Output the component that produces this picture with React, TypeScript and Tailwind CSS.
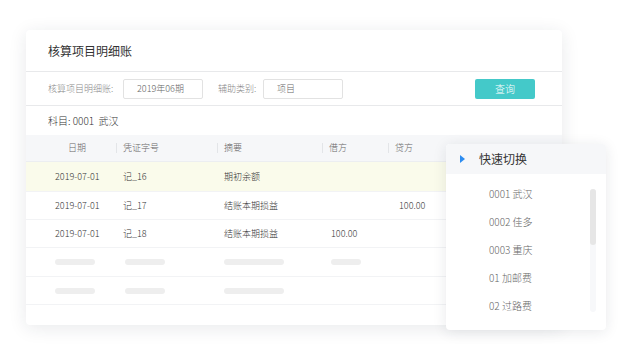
import React from "react";

const font = { fontFamily: '"Noto Sans CJK SC", "Noto Sans", sans-serif' };

function Sep() {
  return <span className="w-px h-[10px] bg-[#e3e5e8] mr-[6px]" />;
}

function Bar({ w }: { w: string }) {
  return <span className={`block h-[6px] rounded-full bg-[#eeeeee] ${w}`} />;
}

const rows = [
  { d: "2019-07-01", v: "记_16", s: "期初余额", j: "", k: "", bg: "bg-[#fafbeb]", h: "h-[30px]" },
  { d: "2019-07-01", v: "记_17", s: "结账本期损益", j: "", k: "100.00", bg: "", h: "h-[28px]" },
  { d: "2019-07-01", v: "记_18", s: "结账本期损益", j: "100.00", k: "", bg: "", h: "h-[28px]" },
];

export default function App() {
  return (
    <div className="relative w-[633px] h-[359px] bg-white overflow-hidden pt-[30px] pl-[26px] font-light" style={font}>
      <div className="w-[536px] h-[295px] bg-white rounded-[4px] shadow-[0_3px_18px_rgba(30,40,60,0.10)] flex flex-col overflow-hidden">
        {/* title */}
        <div className="h-[42px] flex items-center pl-[22px] border-b border-[#e8e9eb]">
          <span className="text-[12px] text-[#333] leading-none font-normal">核算项目明细账</span>
        </div>
        {/* filter */}
        <div className="h-[34px] flex items-center pl-[22px] border-b border-[#e8e9eb] text-[9px]">
          <span className="text-[#888] w-[75px]">核算项目明细账:</span>
          <div className="w-[80px] h-[20px] border border-[#e2e2e2] rounded-[2px] flex items-center pl-[13px] text-[#666]">2019年06期</div>
          <span className="text-[#888] ml-[15px] w-[45px]">辅助类别:</span>
          <div className="w-[80px] h-[20px] border border-[#e2e2e2] rounded-[2px] flex items-center pl-[13px] text-[#666]">项目</div>
          <div className="ml-[132px] w-[60px] h-[20px] rounded-[2px] bg-[#44c9c9] text-white flex items-center justify-center text-[10px]">查询</div>
        </div>
        {/* subject */}
        <div className="h-[29px] flex items-center pl-[22px] text-[10px] text-[#333]">
          <span>科目:&nbsp;0001&nbsp;&nbsp;武汉</span>
        </div>
        {/* table header */}
        <div className="h-[27px] bg-[#f6f7f9] flex items-center text-[9px] text-[#666] border-b border-[#eceef1]">
          <div className="w-[90px] pl-[42px]">日期</div>
          <div className="w-[101px] flex items-center"><Sep />凭证字号</div>
          <div className="w-[105px] flex items-center"><Sep />摘要</div>
          <div className="w-[66px] flex items-center"><Sep />借方</div>
          <div className="flex-1 flex items-center"><Sep />贷方</div>
        </div>
        {rows.map((r, i) => (
          <div key={i} className={`${r.h} ${r.bg} flex items-center text-[9px] text-[#333] border-b border-[#f2f3f5]`}>
            <div className="w-[90px] pl-[29px]">{r.d}</div>
            <div className="w-[101px] pl-[7px]">{r.v}</div>
            <div className="w-[105px] pl-[7px]">{r.s}</div>
            <div className="w-[66px] pl-[9px]">{r.j}</div>
            <div className="flex-1 pl-[11px]">{r.k}</div>
          </div>
        ))}
        <div className="h-[29px] flex items-center border-b border-[#f2f3f5]">
          <div className="w-[90px] pl-[29px]"><Bar w="w-[40px]" /></div>
          <div className="w-[101px] pl-[9px]"><Bar w="w-[40px]" /></div>
          <div className="w-[105px] pl-[7px]"><Bar w="w-[60px]" /></div>
          <div className="w-[66px] pl-[9px]"><Bar w="w-[30px]" /></div>
        </div>
        <div className="h-[28px] flex items-center border-b border-[#f2f3f5]">
          <div className="w-[90px] pl-[29px]"><Bar w="w-[40px]" /></div>
          <div className="w-[101px] pl-[9px]"><Bar w="w-[40px]" /></div>
          <div className="w-[105px] pl-[7px]"><Bar w="w-[60px]" /></div>
        </div>
      </div>

      {/* quick switch popup */}
      <div className="absolute left-[446px] top-[144px] w-[160px] h-[186px] bg-white rounded-[4px] shadow-[0_2px_14px_rgba(30,40,60,0.10)] overflow-hidden">
        <div className="h-[30px] bg-[#f6f7f9] flex items-center pl-[14px]">
          <svg width="5" height="8" viewBox="0 0 5 8" className="mr-[14px]">
            <path d="M0 0 L5 4 L0 8 Z" fill="#2d8cf0" />
          </svg>
          <span className="text-[12px] text-[#333] leading-none font-normal">快速切换</span>
        </div>
        <div className="relative pt-[5px]">
          {["0001 武汉", "0002 佳多", "0003 重庆", "01 加邮费", "02 过路费"].map((t) => (
            <div key={t} className="h-[28px] flex items-center pl-[43px] text-[10px] text-[#666]">{t}</div>
          ))}
          <div className="absolute left-[144px] top-[15px] w-[6px] h-[123px] rounded-full bg-[#f7f8fa]">
            <div className="w-[6px] h-[56px] rounded-full bg-[#e6e6e6]" />
          </div>
        </div>
      </div>
    </div>
  );
}
